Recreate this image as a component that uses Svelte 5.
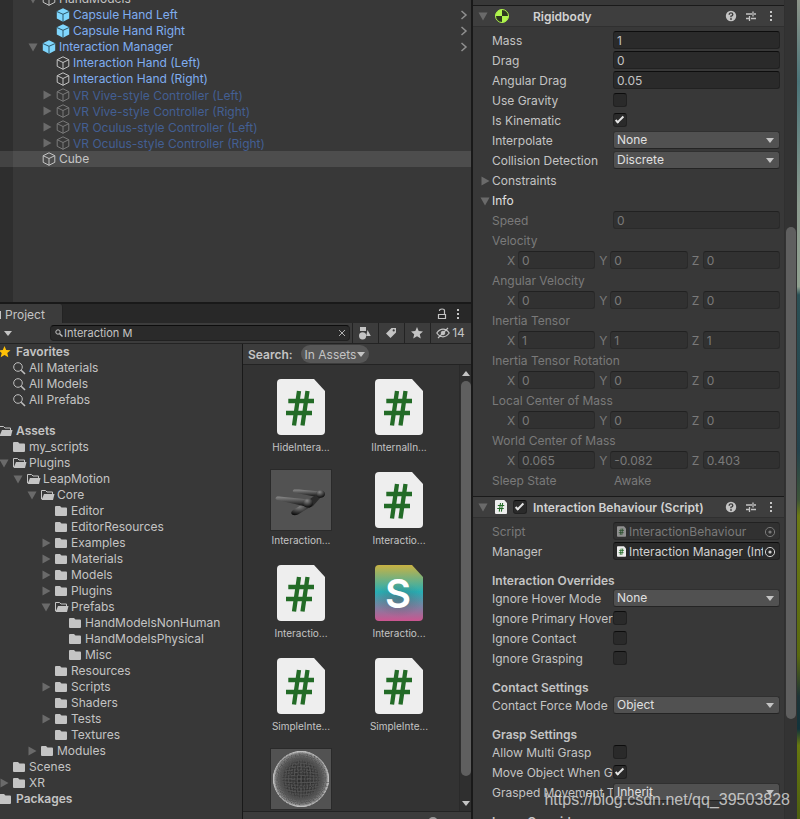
<script>
  const hierarchy = [
    { name: 'HandModels', level: 0, arrow: 'open', kind: 'plain' },
    { name: 'Capsule Hand Left', level: 1, kind: 'prefab', link: true },
    { name: 'Capsule Hand Right', level: 1, kind: 'prefab', link: true },
    { name: 'Interaction Manager', level: 0, arrow: 'open', kind: 'prefab', link: true },
    { name: 'Interaction Hand (Left)', level: 1, kind: 'child' },
    { name: 'Interaction Hand (Right)', level: 1, kind: 'child' },
    { name: 'VR Vive-style Controller (Left)', level: 1, arrow: 'closed', kind: 'inactive' },
    { name: 'VR Vive-style Controller (Right)', level: 1, arrow: 'closed', kind: 'inactive' },
    { name: 'VR Oculus-style Controller (Left)', level: 1, arrow: 'closed', kind: 'inactive' },
    { name: 'VR Oculus-style Controller (Right)', level: 1, arrow: 'closed', kind: 'inactive' },
    { name: 'Cube', level: 0, kind: 'plain', selected: true }
  ];

  const favorites = [
    { name: 'Favorites', level: 0, icon: 'star', bold: true },
    { name: 'All Materials', level: 1, icon: 'search' },
    { name: 'All Models', level: 1, icon: 'search' },
    { name: 'All Prefabs', level: 1, icon: 'search' }
  ];

  const folders = [
    { name: 'Assets', level: 0, icon: 'open', bold: true },
    { name: 'my_scripts', level: 1, icon: 'folder' },
    { name: 'Plugins', level: 1, icon: 'open', arrow: 'open' },
    { name: 'LeapMotion', level: 2, icon: 'open', arrow: 'open' },
    { name: 'Core', level: 3, icon: 'open', arrow: 'open' },
    { name: 'Editor', level: 4, icon: 'folder' },
    { name: 'EditorResources', level: 4, icon: 'folder' },
    { name: 'Examples', level: 4, icon: 'folder', arrow: 'closed' },
    { name: 'Materials', level: 4, icon: 'folder', arrow: 'closed' },
    { name: 'Models', level: 4, icon: 'folder', arrow: 'closed' },
    { name: 'Plugins', level: 4, icon: 'folder', arrow: 'closed' },
    { name: 'Prefabs', level: 4, icon: 'open', arrow: 'open' },
    { name: 'HandModelsNonHuman', level: 5, icon: 'folder' },
    { name: 'HandModelsPhysical', level: 5, icon: 'folder' },
    { name: 'Misc', level: 5, icon: 'folder' },
    { name: 'Resources', level: 4, icon: 'folder' },
    { name: 'Scripts', level: 4, icon: 'folder', arrow: 'closed' },
    { name: 'Shaders', level: 4, icon: 'folder' },
    { name: 'Tests', level: 4, icon: 'folder', arrow: 'closed' },
    { name: 'Textures', level: 4, icon: 'folder' },
    { name: 'Modules', level: 3, icon: 'folder', arrow: 'closed' },
    { name: 'Scenes', level: 1, icon: 'folder' },
    { name: 'XR', level: 1, icon: 'folder', arrow: 'closed' },
    { name: 'Packages', level: 0, icon: 'folder', bold: true }
  ];

  const assets = [
    { name: 'HideIntera...', type: 'script' },
    { name: 'IInternalIn...', type: 'script' },
    { name: 'Interaction...', type: 'hands' },
    { name: 'Interactio...', type: 'script' },
    { name: 'Interactio...', type: 'script' },
    { name: 'Interactio...', type: 'shader' },
    { name: 'SimpleInte...', type: 'script' },
    { name: 'SimpleInte...', type: 'script' },
    { name: '', type: 'sphere' }
  ];

  const rigidbody = [
    { label: 'Mass', type: 'text', value: '1' },
    { label: 'Drag', type: 'text', value: '0' },
    { label: 'Angular Drag', type: 'text', value: '0.05' },
    { label: 'Use Gravity', type: 'check', value: false },
    { label: 'Is Kinematic', type: 'check', value: true },
    { label: 'Interpolate', type: 'select', value: 'None' },
    { label: 'Collision Detection', type: 'select', value: 'Discrete' },
    { label: 'Constraints', type: 'foldout', arrow: 'closed' },
    { label: 'Info', type: 'foldout', arrow: 'open' },
    { label: 'Speed', type: 'text', value: '0', disabled: true },
    { label: 'Velocity', type: 'vector', value: ['0', '0', '0'] },
    { label: 'Angular Velocity', type: 'vector', value: ['0', '0', '0'] },
    { label: 'Inertia Tensor', type: 'vector', value: ['1', '1', '1'] },
    { label: 'Inertia Tensor Rotation', type: 'vector', value: ['0', '0', '0'] },
    { label: 'Local Center of Mass', type: 'vector', value: ['0', '0', '0'] },
    { label: 'World Center of Mass', type: 'vector', value: ['0.065', '-0.082', '0.403'] },
    { label: 'Sleep State', type: 'static', value: 'Awake' }
  ];

  const behaviour = [
    { label: 'Script', type: 'object', value: 'InteractionBehaviour', disabled: true },
    { label: 'Manager', type: 'object', value: 'Interaction Manager (Interaction Manager)' },
    { label: 'Interaction Overrides', type: 'heading' },
    { label: 'Ignore Hover Mode', type: 'select', value: 'None' },
    { label: 'Ignore Primary Hover', type: 'check', value: false },
    { label: 'Ignore Contact', type: 'check', value: false },
    { label: 'Ignore Grasping', type: 'check', value: false },
    { label: 'Contact Settings', type: 'heading' },
    { label: 'Contact Force Mode', type: 'select', value: 'Object' },
    { label: 'Grasp Settings', type: 'heading' },
    { label: 'Allow Multi Grasp', type: 'check', value: false },
    { label: 'Move Object When Grasped', type: 'check', value: true },
    { label: 'Grasped Movement Type', type: 'select', value: 'Inherit' },
    { label: 'Layer Overrides', type: 'heading' }
  ];

  const rings = [2, 5, 8, 11, 14, 17, 20, 22, 24, 26, 27];

  let search = $state('Interaction M');
</script>

{#snippet arrow(dir)}
  <svg class="arrow" width="10" height="10" viewBox="0 0 10 10">
    {#if dir === 'open'}
      <path d="M.5 1.5h9L5 9.500z" />
    {:else if dir === 'closed'}
      <path d="M1.500.5L9.500 5 1.500 9.500z" />
    {/if}
  </svg>
{/snippet}

{#snippet cube(kind)}
  <svg class="cube {kind}" width="14" height="14" viewBox="0 0 14 14">
    {#if kind === 'prefab'}
      <path class="face" d="M7 .3L13.2 3.300V10.600L7 13.800.8 10.600V3.300z" />
      <path class="seam" d="M.8 3.500L7 6.300l6.200-2.800M7 6.300V14" />
    {:else}
      <path class="edge" d="M7 .8L12.800 3.700V10.300L7 13.300 1.200 10.300V3.700zM1.200 3.700L7 6.500l5.800-2.800M7 6.500V13.300" />
    {/if}
  </svg>
{/snippet}

{#snippet treeIcon(icon)}
  <svg class="tree-icon" width="14" height="14" viewBox="0 0 14 14">
    {#if icon === 'star'}
      <path fill="#ffc107" d="M5.500 1l1.700 3.900 4.300.4-3.200 2.800 1 4.200L5.500 10.100l-3.800 2.200 1-4.200L-.5 5.300l4.300-.4z" />
    {:else if icon === 'search'}
      <circle cx="5" cy="6" r="4.300" fill="none" stroke="#c0c0c0" />
      <path d="M8.200 9.200L12 13" stroke="#c0c0c0" stroke-width="1.600" />
    {:else if icon === 'folder'}
      <path fill="#c4c4c4" d="M0 3q0-1 1-1h4l1.500 1.500H11q1 0 1 1V11q0 1-1 1H1q-1 0-1-1z" />
    {:else}
      <path fill="none" stroke="#c4c4c4" d="M.5 11V2.500h4L6 4h5.500v2" />
      <path fill="#c4c4c4" d="M3 6h10.500L12 12H.5z" />
    {/if}
  </svg>
{/snippet}

{#snippet scriptIcon(w, h)}
  <svg width={w} height={h} viewBox="0 0 48 56">
    <path fill="#eee" d="M4 0H37L48 12V52q0 4-4 4H4q-4 0-4-4V4q0-4 4-4z" />
    <path d="M22 12L17 46.500M30.500 12L25.500 46.500M11.300 22H37M9 34H35" fill="none" stroke="#236b27" stroke-width="4.300" />
  </svg>
{/snippet}

{#snippet dots()}
  <svg width="4" height="14" viewBox="0 0 4 14" fill="#c4c4c4">
    <rect x="1" y="2" width="2" height="2" /><rect x="1" y="6" width="2" height="2" /><rect x="1" y="10" width="2" height="2" />
  </svg>
{/snippet}

{#snippet headerTools()}
  <div class="tools">
    <button aria-label="Help">
      <svg width="12" height="12" viewBox="0 0 12 12">
        <circle cx="6" cy="6" r="5.200" fill="#c4c4c4" />
        <path d="M4.200 4.700q0-1.800 1.800-1.800t1.800 1.500Q7.800 5.600 6 6.200V7.200" fill="none" stroke="#3e3e3e" stroke-width="1.400" />
        <circle cx="6" cy="9" r=".9" fill="#3e3e3e" />
      </svg>
    </button>
    <button aria-label="Presets">
      <svg width="12" height="12" viewBox="0 0 12 12" stroke="#c4c4c4" stroke-width="1.300">
        <path d="M1 4h6M9 4h2M8 1.500v5M1 8.500h3M6 8.500h5M4.500 6v5" />
      </svg>
    </button>
    <button aria-label="More">{@render dots()}</button>
  </div>
{/snippet}

{#snippet property(row, id)}
  {#if row.type === 'heading'}
    <h3>{row.label}</h3>
  {:else if row.type === 'foldout'}
    <button class="foldout" class:bright={row.arrow === 'open'}>{@render arrow(row.arrow)}{row.label}</button>
  {:else if row.type === 'vector'}
    <div class="vector-name">{row.label}</div>
    <div class="vector">
      {#each ['X', 'Y', 'Z'] as axis, i}
        <label><span>{axis}</span><input type="text" value={row.value[i]} disabled /></label>
      {/each}
    </div>
  {:else}
    <div class="row" class:dim={row.disabled || row.type === 'static'}>
      {#if row.type === 'static' || row.type === 'object'}
        <span class="name">{row.label}</span>
      {:else}
        <label class="name" for={id}>{row.label}</label>
      {/if}
      {#if row.type === 'text'}
        <input {id} type="text" value={row.value} disabled={row.disabled} />
      {:else if row.type === 'check'}
        <input {id} type="checkbox" checked={row.value} />
      {:else if row.type === 'select'}
        <span class="select"><select {id}><option>{row.value}</option></select></span>
      {:else if row.type === 'object'}
        <div class="object">
          {@render scriptIcon(9, 11)}
          <span>{row.value}</span>
          <button aria-label="Select {row.label}" disabled={row.disabled}>
            <svg width="12" height="12" viewBox="0 0 12 12">
              <circle cx="6" cy="6" r="4.600" fill="none" stroke="currentColor" />
              <circle cx="6" cy="6" r="1.600" fill="currentColor" />
            </svg>
          </button>
        </div>
      {:else}
        <span class="value">{row.value}</span>
      {/if}
    </div>
  {/if}
{/snippet}

<div class="editor">
  <div class="left">
    <section class="hierarchy">
      <ul>
        {#each hierarchy as item}
          <li class={item.kind} class:selected={item.selected}>
            <div class="node" style="padding-left: {15 + item.level * 14}px">
              {@render arrow(item.arrow)}
              {@render cube(item.kind)}
              <span>{item.name}</span>
            </div>
            {#if item.link}
              <svg class="chevron" width="8" height="10" viewBox="0 0 8 10"><path d="M1.500 1L6 5 1.500 9" /></svg>
            {/if}
          </li>
        {/each}
      </ul>
    </section>

    <section class="project">
      <header class="tabs">
        <div class="tab"><i></i>Project</div>
        <div class="window-tools">
          <button aria-label="Lock">
            <svg width="10" height="12" viewBox="0 0 10 12" fill="none" stroke="#c4c4c4">
              <path d="M1.500 6.500h7v4h-7z" stroke-width="1.200" /><path d="M2.500 3V2.500Q2.500 1 5 1t2.500 1.500v4" stroke-width="1.200" />
            </svg>
          </button>
          <button aria-label="Window menu">{@render dots()}</button>
        </div>
      </header>

      <div class="toolbar">
        <button class="create" aria-label="Create"><i class="caret"></i></button>
        <div class="search">
          <svg width="8" height="8" viewBox="0 0 8 8" fill="none" stroke="#c4c4c4">
            <circle cx="3" cy="3" r="2.200" /><path d="M4.700 4.700L7.500 7.500" stroke-width="1.400" />
          </svg>
          <input type="text" aria-label="Search assets" bind:value={search} />
          <button aria-label="Clear search" onclick={() => (search = '')}>
            <svg width="8" height="8" viewBox="0 0 8 8" stroke="#b0b0b0"><path d="M1 1l6 6M7 1L1 7" /></svg>
          </button>
        </div>
        <button class="filter" aria-label="Filter by type">
          <svg width="14" height="14" viewBox="0 0 14 14" fill="#c4c4c4">
            <path d="M2 1h6v4H2zM9.500 4l3.300 6H8.200z" /><circle cx="4.600" cy="9.800" r="3.600" />
          </svg>
        </button>
        <button class="filter" aria-label="Filter by label">
          <svg width="12" height="12" viewBox="0 0 12 12">
            <path fill="#c4c4c4" d="M6.500 1h4.500v4.500L5.500 11 1 6.500z" /><circle cx="8.700" cy="3.400" r="1.100" fill="#3c3c3c" />
          </svg>
        </button>
        <button class="filter" aria-label="Save search">
          <svg width="12" height="12" viewBox="0 0 12 12" fill="#c4c4c4">
            <path d="M6 0l1.700 4 4.300.4-3.200 2.800 1 4.300L6 9.200l-3.800 2.300 1-4.300L0 4.400 4.300 4z" />
          </svg>
        </button>
        <button class="filter hidden-count">
          <svg width="14" height="12" viewBox="0 0 14 12" fill="none" stroke="#c4c4c4">
            <path d="M.8 6Q3.500 2.200 7 2.200T13.200 6Q10.500 9.800 7 9.800T.8 6zM2 11L12 1" stroke-width="1.200" />
            <circle cx="7" cy="6" r="1.800" fill="#c4c4c4" />
          </svg>14
        </button>
      </div>

      <div class="browser">
        <nav>
          {#each [favorites, folders] as group}
            <ul>
              {#each group as item}
                <li class="node" class:bold={item.bold} style="margin-left: {item.level * 14 - 15}px">
                  {@render arrow(item.arrow)}
                  {@render treeIcon(item.icon)}
                  <span>{item.name}</span>
                </li>
              {/each}
            </ul>
          {/each}
        </nav>

        <div class="results">
          <div class="scope">
            <b>Search:</b>
            <button>In Assets<i class="caret"></i></button>
          </div>
          <div class="scroll">
            <ul class="grid">
              {#each assets as asset}
                <li>
                  <div class="thumb">
                    {#if asset.type === 'script'}
                      {@render scriptIcon(48, 56)}
                    {:else if asset.type === 'shader'}
                      <svg width="48" height="56" viewBox="0 0 48 56">
                        <defs>
                          <linearGradient id="shader" x2="0" y2="1">
                            <stop offset="0" stop-color="#c9b243" />
                            <stop offset=".48" stop-color="#27aeb4" />
                            <stop offset="1" stop-color="#cc5590" />
                          </linearGradient>
                          <radialGradient id="shade"><stop offset="0" stop-color="#444" stop-opacity=".3" /><stop offset="1" stop-color="#444" stop-opacity="0" /></radialGradient>
                        </defs>
                        <path fill="url(#shader)" d="M4 0H37L48 12V52q0 4-4 4H4q-4 0-4-4V4q0-4 4-4z" />
                        <ellipse cx="24" cy="34" rx="24" ry="18" fill="url(#shade)" />
                        <text x="23" y="43" text-anchor="middle">S</text>
                      </svg>
                    {:else if asset.type === 'hands'}
                      <svg class="preview" width="60" height="60" viewBox="0 0 60 60">
                        <defs>
                          <linearGradient id="capsule" x2="0" y2="1">
                            <stop offset="0" stop-color="#8a8a8a" />
                            <stop offset=".5" stop-color="#4c4c4c" />
                            <stop offset="1" stop-color="#0c0c0c" />
                          </linearGradient>
                          <radialGradient id="joint" cx=".4" cy=".25" r=".75">
                            <stop offset="0" stop-color="#858585" />
                            <stop offset=".6" stop-color="#3c3c3c" />
                            <stop offset="1" stop-color="#0c0c0c" />
                          </radialGradient>
                        </defs>
                        <path fill="url(#capsule)" d="M23 19.500q-2.500 1.500 0 3L46 27q4-1 3-5.500L28 19.500z" />
                        <path fill="#2b2b2b" d="M39 29L46 24 50 27 42 36 38 38z" />
                        <ellipse cx="49.500" cy="24" rx="4.500" ry="3.800" fill="url(#joint)" />
                        <path fill="url(#joint)" d="M22 40L33 33.500 39 37 27 44.500q-3.500 1.500-6 0-2-2 1-4.500z" />
                        <path fill="url(#capsule)" d="M6 26.500q-3 2 0 3.500L35 36.500q5-2 3-7L8 26.500z" />
                        <ellipse cx="37" cy="33" rx="5" ry="4.500" fill="url(#joint)" />
                      </svg>
                    {:else}
                      <svg class="preview" width="60" height="60" viewBox="0 0 60 60" fill="none">
                        <defs>
                          <radialGradient id="wire" gradientUnits="userSpaceOnUse" cx="30" cy="30" r="28">
                            <stop offset="0" stop-color="#050505" />
                            <stop offset=".6" stop-color="#2c2c2c" />
                            <stop offset=".85" stop-color="#7a7a7a" />
                            <stop offset="1" stop-color="#c8c8c8" />
                          </radialGradient>
                        </defs>
                        <g stroke="url(#wire)" stroke-width=".6">
                          <circle cx="30" cy="30" r="27.500" stroke="#aaa" stroke-dasharray="2 1" />
                          {#each rings as r}
                            <ellipse cx="30" cy="30" rx={r} ry="27.500" stroke-dasharray="3 1" />
                            <ellipse cx="30" cy="30" rx="27.500" ry={r} stroke-dasharray="3 1" />
                          {/each}
                        </g>
                      </svg>
                    {/if}
                  </div>
                  <span>{asset.name}</span>
                </li>
              {/each}
            </ul>
            <div class="scrollbar">
              <i class="caret up"></i>
              <div class="handle"></div>
              <i class="caret"></i>
            </div>
          </div>
          <footer><input type="range" aria-label="Icon size" min="0" max="100" value="0" /></footer>
        </div>
      </div>
    </section>
  </div>

  <aside class="inspector">
    <div class="components">
      <section>
        <header>
          {@render arrow('open')}
          <svg class="component-icon" width="14" height="14" viewBox="0 0 14 14">
            <circle cx="7" cy="7" r="6.500" fill="#2d3820" stroke="#b0f54d" />
            <path fill="#b0f54d" d="M7 7V.5A6.500 6.500 0 0 0 .5 7zM7 7v6.500A6.500 6.500 0 0 0 13.500 7z" />
          </svg>
          <h2>Rigidbody</h2>
          {@render headerTools()}
        </header>
        <div class="properties">
          {#each rigidbody as row, i}{@render property(row, `rb-${i}`)}{/each}
        </div>
      </section>
      <section>
        <header>
          {@render arrow('open')}
          <span class="component-icon">{@render scriptIcon(12, 14)}</span>
          <input type="checkbox" aria-label="Enable Interaction Behaviour" checked />
          <h2>Interaction Behaviour (Script)</h2>
          {@render headerTools()}
        </header>
        <div class="properties">
          {#each behaviour as row, i}{@render property(row, `ib-${i}`)}{/each}
        </div>
      </section>
    </div>
    <div class="scrollbar"><div class="handle"></div></div>
  </aside>
  <div class="desktop"></div>
  <div class="watermark">https://blog.csdn.net/qq_39503828</div>
</div>

<style>
  :global(body) {
    margin: 0;
    background: #191919;
  }

  .editor {
    position: relative;
    display: grid;
    grid-template-columns: minmax(0, 471fr) minmax(0, 326fr) 3px;
    height: 100vh;
    overflow: hidden;
    background: #191919;
    color: #c4c4c4;
    font: 12px/16px Inter, "Noto Sans", sans-serif;
  }

  ul {
    margin: 0;
    padding: 0;
    list-style: none;
  }

  h2, h3 {
    margin: 0;
    font-size: 12px;
    font-weight: 600;
  }

  svg {
    display: block;
    flex: none;
  }

  button, input, select {
    box-sizing: border-box;
    margin: 0;
    padding: 0;
    border: 0;
    background: none;
    color: inherit;
    font: inherit;
  }

  .left {
    display: grid;
    grid-template-rows: minmax(0, 302fr) minmax(0, 515fr);
    gap: 2px;
  }

  .arrow {
    fill: #6a6a6a;
  }

  .caret {
    width: 0;
    border: 4px solid transparent;
    border-top: 5px solid #c4c4c4;
    border-bottom: 0;
  }

  .caret.up {
    border-top: 0;
    border-bottom: 5px solid #c4c4c4;
  }

  .node {
    display: flex;
    align-items: center;
    height: 16px;
    white-space: nowrap;
  }

  /* hierarchy */
  .hierarchy {
    overflow: hidden;
    background: linear-gradient(90deg, #2e2e2e 13px, #383838 13px);
  }

  .hierarchy ul {
    margin-top: -9px;
  }

  .hierarchy li {
    display: flex;
    align-items: center;
    justify-content: space-between;
    padding: 0 3px 0 13px;
  }

  .hierarchy .node span {
    margin-left: 3px;
  }

  .hierarchy .cube {
    margin-left: 4px;
  }

  .hierarchy li.prefab, .hierarchy li.child {
    color: #7fadf0;
  }

  .hierarchy li.inactive {
    color: #435f93;
  }

  .hierarchy .inactive span {
    padding-top: 1px;
  }

  .hierarchy li.selected {
    background: linear-gradient(90deg, #434343 13px, #4d4d4d 13px);
  }

  .face {
    fill: #7fd6fd;
  }

  .seam {
    fill: none;
    stroke: #2b5568;
  }

  .edge {
    fill: none;
    stroke: #c4c4c4;
  }

  .inactive .edge {
    stroke: #7a7a7a;
  }

  .chevron {
    fill: none;
    stroke: #909090;
    stroke-width: 1.5;
  }

  /* project window */
  .project {
    display: flex;
    flex-direction: column;
    min-height: 0;
  }

  .tabs {
    display: flex;
    justify-content: space-between;
    height: 19px;
    background: #282828;
  }

  .tab {
    display: flex;
    align-items: center;
    gap: 4px;
    padding-top: 2px;
    padding-right: 17px;
    border-right: 1px solid #232323;
    border-radius: 0 3px 0 0;
    background: #3c3c3c;
    line-height: 17px;
  }

  .tab i {
    width: 1px;
    height: 8px;
    background: #c4c4c4;
  }

  .window-tools {
    display: flex;
    align-items: center;
    gap: 9px;
    padding-right: 11px;
  }

  .toolbar {
    display: flex;
    align-items: center;
    height: 20px;
    border-bottom: 1px solid #232323;
    background: #3c3c3c;
  }

  .create {
    display: flex;
    width: 50px;
    padding-left: 4px;
  }

  .search {
    display: flex;
    flex: 1;
    align-items: center;
    box-sizing: border-box;
    height: 16px;
    margin-right: 2px;
    padding: 0 3px 0 4px;
    border: 1px solid #212121;
    border-top-color: #0d0d0d;
    border-radius: 4px;
    background: #2a2a2a;
  }

  .search input {
    flex: 1;
    min-width: 0;
    margin-left: 1px;
    height: 14px;
    outline: 0;
    font-size: 11px;
  }

  .filter {
    display: flex;
    align-items: center;
    justify-content: center;
    width: 26px;
    height: 20px;
    padding-right: 1px;
    border-left: 1px solid #232323;
  }

  .hidden-count {
    gap: 2px;
    width: 41px;
  }

  .browser {
    display: grid;
    flex: 1;
    grid-template-columns: minmax(0, 242fr) minmax(0, 228fr);
    gap: 1px;
    min-height: 0;
  }

  nav {
    overflow: hidden;
    background: #383838;
  }

  nav ul + ul {
    margin-top: 15px;
  }

  .tree-icon {
    margin-left: 4px;
  }

  nav .node span {
    margin-left: 2px;
  }

  nav .bold span {
    margin-left: 3px;
    font-weight: 600;
  }

  .results {
    display: flex;
    flex-direction: column;
    min-height: 0;
    overflow: hidden;
    background: #333;
  }

  .scope {
    display: flex;
    align-items: center;
    gap: 8px;
    height: 20px;
    padding-left: 5px;
    border-bottom: 1px solid #232323;
    background: #3c3c3c;
  }

  .scope b {
    padding-top: 1px;
    font-weight: 600;
  }

  .scope button {
    display: flex;
    align-items: center;
    gap: 1px;
    height: 18px;
    padding: 1px 4px 0;
    border-radius: 9px;
    background: #575757;
  }

  .scroll {
    display: flex;
    flex: 1;
    min-height: 0;
    overflow: hidden;
  }

  .grid {
    display: grid;
    flex: 1;
    grid-template-columns: 98px 98px;
    grid-auto-rows: 64px;
    row-gap: 29px;
    padding: 10px 0 0 9px;
  }

  .grid li {
    font-size: 10px;
    text-align: center;
  }

  .thumb {
    display: flex;
    align-items: center;
    justify-content: center;
    height: 64px;
  }

  .thumb text {
    fill: #fff;
    font: 600 40px Inter, sans-serif;
  }

  .preview {
    background: #525252;
    box-shadow: 0 0 0 1px #2a2a2a;
  }

  .grid span {
    display: block;
  }

  .scroll .scrollbar {
    display: flex;
    flex-direction: column;
    align-items: center;
    gap: 5px;
    width: 11px;
    padding: 6px 0 5px;
    border-left: 1px solid #2a2a2a;
    background: #2f2f2f;
  }

  .scroll .handle {
    flex: 1;
    width: 10px;
    margin-bottom: 20px;
    border-radius: 5px;
    background: #5f5f5f;
  }

  footer {
    display: flex;
    justify-content: flex-end;
    align-items: center;
    flex: none;
    height: 20px;
    margin-bottom: -13px;
    padding-right: 3px;
    border-top: 1px solid #232323;
    background: #3c3c3c;
  }

  footer input {
    width: 40px;
    height: 10px;
    appearance: none;
  }

  footer input::-webkit-slider-thumb {
    width: 10px;
    height: 10px;
    border-radius: 5px;
    background: #999;
    appearance: none;
  }

  /* inspector */
  .inspector {
    display: flex;
    margin-left: 2px;
    overflow: hidden;
    background: #383838;
  }

  .components {
    flex: 1;
    min-width: 0;
    padding-top: 5px;
  }

  .inspector header {
    display: flex;
    align-items: center;
    height: 20px;
    padding: 0 7px 0 5px;
    border-top: 1px solid #1a1a1a;
    border-bottom: 1px solid #303030;
    background: #3e3e3e;
  }

  .component-icon {
    margin-left: 7px;
  }

  .inspector h2 {
    flex: 1;
    margin-left: 6px;
    padding-top: 1px;
    color: #d2d2d2;
    white-space: nowrap;
  }

  svg.component-icon + h2 {
    margin-left: 24px;
  }

  header .component-icon + input {
    margin-left: 6px;
  }

  .tools {
    display: flex;
    gap: 8px;
  }

  .tools button {
    display: flex;
    align-items: center;
    justify-content: center;
    width: 12px;
    height: 14px;
  }

  .properties {
    padding: 4px 4px 5px 19px;
    line-height: 18px;
  }

  .row {
    display: grid;
    grid-template-columns: 121px minmax(0, 1fr);
    align-items: center;
    height: 18px;
    margin-bottom: 2px;
  }

  .name {
    overflow: hidden;
    padding-top: 1px;
    white-space: nowrap;
  }

  .inspector h3 {
    padding-top: 10px;
    line-height: 17px;
  }

  .row input[type="text"], .vector input, .object {
    box-sizing: border-box;
    width: 100%;
    height: 18px;
    padding: 1px 3px 0;
    border: 1px solid #212121;
    border-top-color: #0d0d0d;
    border-radius: 3px;
    background: #2a2a2a;
  }

  .dim, .vector, .vector-name {
    color: #7a7a7a;
  }

  .row.dim input[type="text"], .vector input, .dim .object {
    border-color: #2a2a2a;
    border-top-color: #212121;
    background: #313131;
  }

  .value {
    padding: 1px 0 0 1px;
  }

  .vector-name {
    height: 18px;
    margin-bottom: 1px;
    padding-top: 1px;
  }

  .vector {
    display: flex;
    gap: 4px;
    height: 18px;
    margin: 0 0 2px 15px;
  }

  .vector label {
    display: flex;
    flex: 1;
    min-width: 0;
  }

  .vector span {
    flex: none;
    width: 11px;
    padding-top: 1px;
  }

  input[type="checkbox"] {
    width: 14px;
    height: 14px;
    border: 1px solid #212121;
    border-top-color: #0d0d0d;
    border-radius: 3px;
    background: #2a2a2a;
    appearance: none;
  }

  input[type="checkbox"]:checked::before {
    content: "";
    display: block;
    width: 7px;
    height: 2px;
    margin: 3px 0 0 1px;
    border: solid #e4e4e4;
    border-width: 0 0 2px 2px;
    transform: rotate(-45deg);
  }

  .select {
    position: relative;
    display: flex;
  }

  .select select {
    width: 100%;
    height: 18px;
    padding: 0 16px 0 3px;
    border: 1px solid #303030;
    border-bottom-color: #242424;
    border-radius: 3px;
    background: #515151;
    color: #e0e0e0;
    line-height: 16px;
    appearance: none;
  }

  .select::after {
    content: "";
    position: absolute;
    top: 7px;
    right: 6px;
    border: 4px solid transparent;
    border-top: 5px solid #c4c4c4;
    border-bottom: 0;
    pointer-events: none;
  }

  .object {
    display: flex;
    align-items: center;
    gap: 3px;
    color: #d2d2d2;
    line-height: 16px;
  }

  .object span {
    flex: 1;
    overflow: hidden;
    white-space: nowrap;
  }

  .object button {
    margin-left: -2px;
  }

  .dim .object {
    color: #7a7a7a;
  }

  .dim .object > svg {
    opacity: 0.5;
  }

  .foldout {
    display: flex;
    align-items: center;
    gap: 2px;
    height: 18px;
    margin: 0 0 2px -12px;
    padding-top: 1px;
  }

  .foldout.bright {
    color: #e0e0e0;
  }

  .inspector > .scrollbar {
    display: flex;
    flex-direction: column;
    width: 10px;
    padding: 0 1px;
    border-left: 1px solid #303030;
    background: #333;
  }

  .inspector > .scrollbar::before {
    content: "";
    flex: 227;
  }

  .inspector > .scrollbar::after {
    content: "";
    flex: 100;
  }

  .inspector .handle {
    flex: 492;
    border-radius: 5px;
    background: #5f5f5f;
  }

  .desktop {
    background: linear-gradient(#8d9489, #4b7479 10%, #8b9a8e 25%, #8fa08f 35%, #2b5055 36%, #24424c 55%, #3d5438 61%, #6c7a14 63%, #59690f 80%, #1f3437 85%, #12343c 89%, #67780f 91%, #4d5f10);
  }

  .watermark {
    position: absolute;
    right: 10px;
    bottom: 10px;
    color: rgba(225, 225, 225, 0.8);
    font: 16px/18px "Liberation Sans", Arial, sans-serif;
  }
</style>
